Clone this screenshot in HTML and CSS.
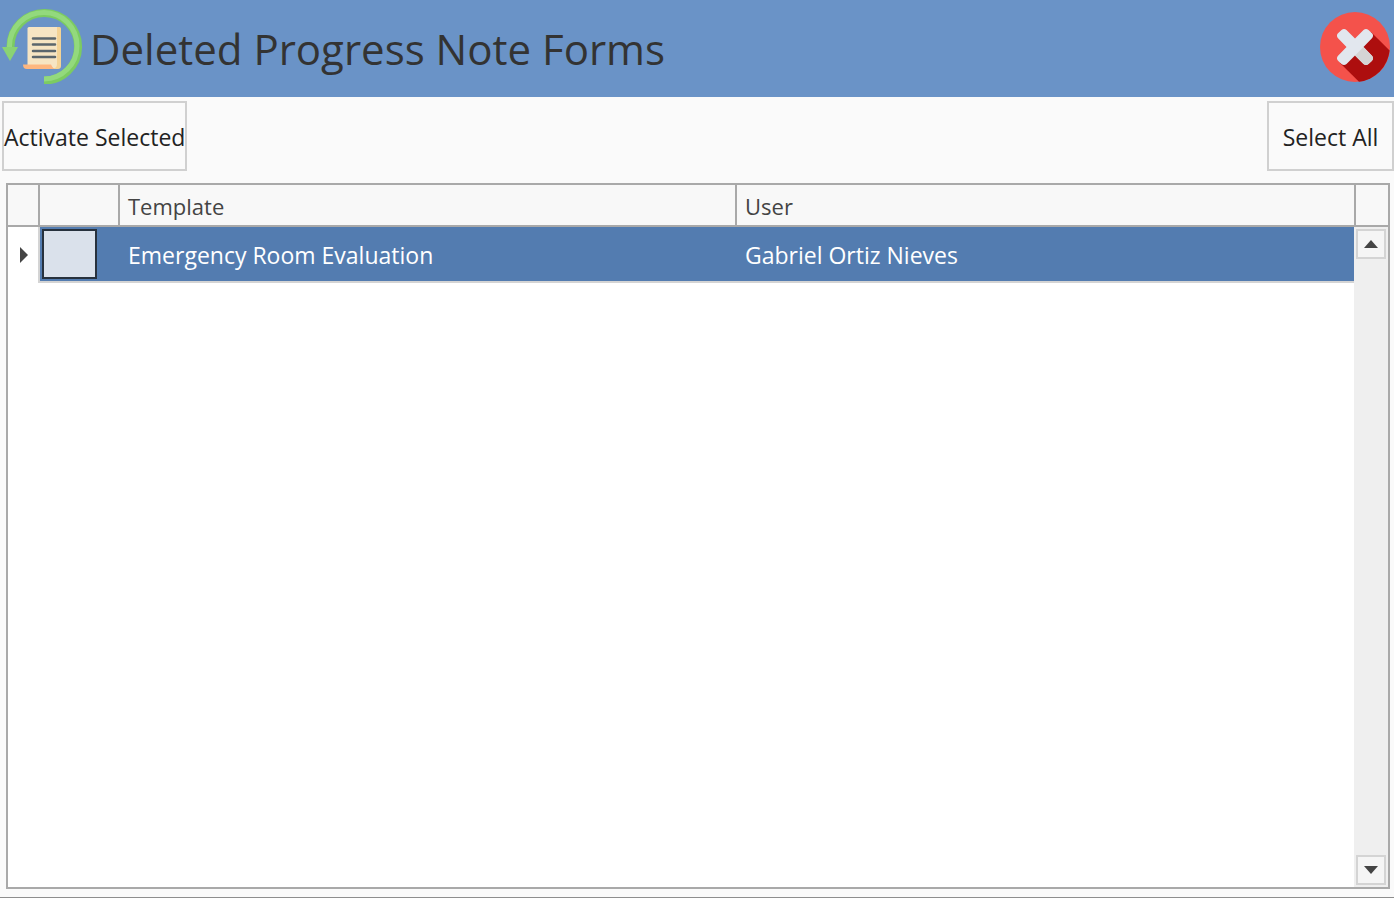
FILE: index.html
```html
<!DOCTYPE html>
<html lang="en">
<head>
<meta charset="utf-8">
<title>Deleted Progress Note Forms</title>
<link rel="stylesheet" href="styles.css">
</head>
<body>
<header class="titlebar">
  <svg class="restore-icon" viewBox="0 0 84 84" aria-hidden="true">
    <path d="M10.500 48V46A33.800 33.800 0 1 1 44 80.500" fill="none" stroke="#7ccb61" stroke-width="8"/>
    <path d="M9.500 48V46A34.500 33.800 0 0 1 44 12.500A33 33.300 0 0 1 77 46A33 33 0 0 1 44 79" fill="none" stroke="#93d97d" stroke-width="5"/>
    <path d="M2 47H18L10 61Z" fill="#8ad373"/>
    <path d="M27.500 28.500Q27.500 27 29 27H58V66Q58 69 55 69H27.500Z" fill="#f6e5c3"/>
    <path d="M57 27H59.500Q61 27 61 28.500V66Q61 69 58 69H53Q57 68 57 64Z" fill="#f4d395"/>
    <path d="M23 64.500H51Q53 69 56 69H27Q23 69 23 64.500Z" fill="#fdb780"/>
    <path d="M33 38.500H55M33 44.500H55M33 51H55M33 57H55" stroke="#5b666c" stroke-width="2.500" stroke-linecap="round"/>
  </svg>
  <h1 class="title">Deleted Progress Note Forms</h1>
  <button class="close" type="button" aria-label="Close">
    <svg class="close-icon" viewBox="0 0 70 70" aria-hidden="true">
      <circle cx="35" cy="35" r="35" fill="#f4524b"/>
      <path d="M51 20L69.600 38.500A35 35 0 0 1 39 69.800L20 51Z" fill="#ad0e0e"/>
      <path d="M17.800 26Q16 23.500 18 21.300L21.500 18Q24 16.200 26.500 18L35 26.500L43.500 18Q46 16.200 48.500 18L52 21.300Q54 23.500 52.200 26L43.500 35L52.200 44Q54 46.500 52 48.700L48.500 52Q46 53.800 43.500 52L35 43.500L26.500 52Q24 53.800 21.500 52L18 48.700Q16 46.500 17.800 44L26.500 35Z" fill="#e2e7ee"/>
      <path d="M43.500 35L52.200 44Q54 46.500 52 48.700L48.500 52Q46 53.800 43.500 52L35 43.500Z" fill="#d5d5d5"/>
    </svg>
  </button>
</header>
<main class="content">
  <div class="toolbar">
    <button class="tool tool-activate" type="button">Activate Selected</button>
    <button class="tool tool-select" type="button">Select All</button>
  </div>
  <section class="grid">
    <div class="rows">
      <table class="table">
        <colgroup>
          <col class="col-marker"><col class="col-check"><col><col>
        </colgroup>
        <thead>
          <tr><th></th><th></th><th scope="col">Template</th><th scope="col">User</th></tr>
        </thead>
        <tbody>
          <tr class="selected">
            <td class="marker"><svg class="marker-icon" viewBox="0 0 8 16" aria-hidden="true"><path d="M0 0L8 8L0 16Z" fill="#444"/></svg></td>
            <td class="pick"><input class="check" type="checkbox" aria-label="Select Emergency Room Evaluation"></td>
            <td>Emergency Room Evaluation</td>
            <td>Gabriel Ortiz Nieves</td>
          </tr>
        </tbody>
      </table>
    </div>
    <div class="side">
      <div class="side-head"></div>
      <div class="scrollbar">
        <button class="arrow" type="button" aria-label="Scroll up"><svg class="arrow-icon" viewBox="0 0 14 8" aria-hidden="true"><path d="M0 8L7 0L14 8Z" fill="#444"/></svg></button>
        <button class="arrow" type="button" aria-label="Scroll down"><svg class="arrow-icon" viewBox="0 0 14 8" aria-hidden="true"><path d="M0 0L7 8L14 0Z" fill="#444"/></svg></button>
      </div>
    </div>
  </section>
</main>
</body>
</html>
```
FILE: styles.css
```css
* {
  box-sizing: border-box;
}

body {
  margin: 0;
  height: 100vh;
  display: flex;
  flex-direction: column;
  background: #fafafa;
  border-bottom: 1px solid #8e8e8e;
  color: #222;
  font-family: "Segoe UI", "Open Sans", "Noto Sans", sans-serif;
  font-size: 23px;
  line-height: 30px;
}

button {
  font: inherit;
  color: inherit;
  padding: 0;
  cursor: pointer;
}

.titlebar {
  display: flex;
  align-items: flex-start;
  padding: 0 4px 0 0;
  height: 97px;
  background: #6a93c7;
}

.restore-icon {
  flex: none;
  width: 84px;
  height: 84px;
}

.title {
  flex: 1;
  margin: 0 0 0 6px;
  color: #333;
  font-size: 42px;
  font-weight: 400;
  line-height: 98px;
  white-space: nowrap;
}

.close {
  width: 70px;
  height: 70px;
  margin-top: 12px;
  border: 0;
  border-radius: 50%;
  background: none;
}

.close-icon {
  display: block;
}

.content {
  flex: 1;
  display: flex;
  flex-direction: column;
  gap: 12px;
  padding: 4px 0 8px;
  min-height: 0;
}

.toolbar {
  display: flex;
  justify-content: space-between;
  padding-left: 2px;
}

.tool {
  height: 70px;
  padding-top: 2px;
  border: 2px solid #d0d0d0;
  background: #fafafa;
  white-space: nowrap;
}

.tool-activate {
  width: 185px;
}

.tool-select {
  width: 127px;
}

.grid {
  flex: 1;
  display: flex;
  min-height: 0;
  margin: 0 4px 0 6px;
  border: 2px solid #a9a9a9;
  background: #fff;
}

.rows {
  flex: 1;
}

.table {
  width: 100%;
  table-layout: fixed;
  border-collapse: separate;
  border-spacing: 0;
}

.col-marker {
  width: 32px;
}

.col-check {
  width: 80px;
}

.table th {
  height: 42px;
  padding: 2px 8px 0;
  border-right: 2px solid #a9a9a9;
  border-bottom: 2px solid #a9a9a9;
  background: #f8f8f8;
  color: #444;
  font-size: 22px;
  font-weight: 400;
  text-align: left;
}

.table th:last-child {
  border-right: 0;
}

.table td {
  height: 56px;
  padding: 2px 8px 0;
  border-bottom: 2px solid #d4d4d4;
  background: #537cb0;
  color: #fff;
}

.table .marker {
  padding: 0 10px 0 12px;
  border-right: 2px solid #d4d4d4;
  border-bottom: 0;
  background: #fff;
}

.marker-icon {
  display: block;
  width: 8px;
  height: 16px;
}

.table .pick {
  padding: 0 2px;
}

.check {
  display: block;
  appearance: none;
  width: 55px;
  height: 50px;
  margin: 0;
  border: 2px solid #27313d;
  background: #dae1eb;
}

.side {
  display: flex;
  flex-direction: column;
  width: 34px;
}

.side-head {
  height: 42px;
  border-left: 2px solid #a9a9a9;
  border-bottom: 2px solid #a9a9a9;
  background: #f8f8f8;
}

.scrollbar {
  flex: 1;
  display: flex;
  flex-direction: column;
  justify-content: space-between;
  padding: 2px;
  background: #efefef;
}

.arrow {
  display: flex;
  align-items: center;
  justify-content: center;
  width: 30px;
  height: 30px;
  border: 2px solid #d4d4d4;
  background: #f5f5f5;
}

.arrow-icon {
  width: 14px;
  height: 8px;
}
```
